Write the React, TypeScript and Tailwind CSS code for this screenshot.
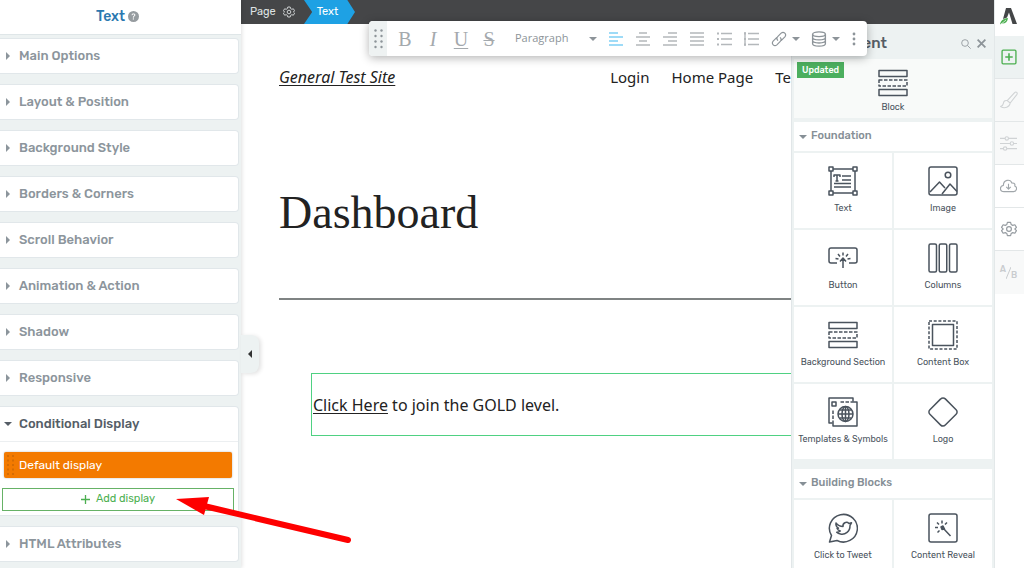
import React from "react";
import type { ReactNode } from "react";
import { BsQuestionCircleFill } from "react-icons/bs";

const sections = [
  "Main Options",
  "Layout & Position",
  "Background Style",
  "Borders & Corners",
  "Scroll Behavior",
  "Animation & Action",
  "Shadow",
  "Responsive",
];

function Svg({ size = 30, className = "", children, w = 1.5 }: { size?: number; className?: string; children: ReactNode; w?: number }) {
  return (
    <svg width={size} height={size} viewBox="0 0 30 30" fill="none" stroke="currentColor" strokeWidth={w} strokeLinejoin="round" aria-hidden="true" className={"shrink-0 " + className}>
      {children}
    </svg>
  );
}

function Caret({ down = false, className = "" }: { down?: boolean; className?: string }) {
  return (
    <svg width="8" height="8" viewBox="0 0 8 8" fill="currentColor" aria-hidden="true" className={"shrink-0 " + className}>
      <path d={down ? "M0 2h8L4 6z" : "M2 0v8l4-4z"} />
    </svg>
  );
}

const BlockIcon = () => (
  <Svg>
    <path d="M1 2.500h28v6H1zM1 21.500h28v6H1z" />
    <path d="M1 12h28v6H1z" strokeDasharray="3.500 1.500" />
  </Svg>
);
const TextIcon = () => (
  <Svg>
    <path d="M5 3h20M5 27h20M3 5v20M27 5v20" />
    <path d="M1 1h4v4H1zM25 1h4v4h-4zM1 25h4v4H1zM25 25h4v4h-4z" />
    <path d="M6 11V9h6v2M9 9v6M7.500 15h3M14 10h9M14 14h9M6 17.500h17M6 21h17" />
  </Svg>
);
const ImageIcon = () => (
  <Svg>
    <rect x="1" y="1" width="28" height="28" rx="2" />
    <circle cx="20" cy="9" r="2.800" />
    <path d="M2 26l9.500-10 5.500 6M14 28l8-10 7 7.500" />
  </Svg>
);
const ButtonIcon = () => (
  <Svg>
    <path d="M9 20H3a2 2 0 0 1-2-2V7a2 2 0 0 1 2-2h24a2 2 0 0 1 2 2v11a2 2 0 0 1-2 2h-6" />
    <path d="M15 25v-9M12 18.500l3-3.500 3 3.500M15 9.500v3M10 11l2 2.500M20 11l-2 2.500M7.500 15.500l3 .5M22.500 15.500l-3 .5" />
  </Svg>
);
const ColumnsIcon = () => (
  <Svg>
    <rect x="1" y="1" width="7.500" height="28" rx="1.500" />
    <rect x="11.250" y="1" width="7.500" height="28" rx="1.500" />
    <rect x="21.500" y="1" width="7.500" height="28" rx="1.500" />
  </Svg>
);
const ContentBoxIcon = () => (
  <Svg>
    <path d="M1 1h28v28H1z" strokeDasharray="3 1.700" />
    <path d="M4.500 4.500h21v21h-21z" />
  </Svg>
);
const TemplatesIcon = () => (
  <Svg>
    <path d="M25 4.500V1H1v25h3.500" />
    <path d="M11 5h18v24H5V12" />
    <path d="M4 5h4v4H4z" />
    <path d="M11 5h13M5 12v12" stroke="white" strokeDasharray="1.500 3.500" strokeWidth="2" />
    <circle cx="17.500" cy="17" r="7.500" />
    <ellipse cx="17.500" cy="17" rx="3.500" ry="7.500" />
    <path d="M17.500 9.500v15M10 17h15M11.500 13h12M11.500 21h12" />
  </Svg>
);
const LogoIcon = () => (
  <Svg>
    <path d="M12.700 1.900 1.900 12.700a3.200 3.200 0 0 0 0 4.600l10.800 10.800a3.200 3.200 0 0 0 4.600 0l10.800-10.800a3.200 3.200 0 0 0 0-4.600L17.300 1.900a3.200 3.200 0 0 0-4.600 0z" />
  </Svg>
);
const TweetIcon = () => (
  <Svg>
    <path d="M3.500 22.500A14 13.800 0 1 1 9 27.500L1.500 29z" />
    <path d="M8 10c2 2.500 4.500 3.500 7 3.500-.5-3.500 3.500-5.500 6-3l2.500-.7-1.500 2.700c.3 6-5 9.500-9.500 8.500-1.800-.3-3-1-3.800-1.800 1.600 0 2.800-.4 3.600-1.200-2-.6-2.800-1.500-3.200-2.600l1.400-.2C8.300 14 7.600 12.300 8 10z" />
  </Svg>
);
const RevealIcon = () => (
  <Svg>
    <rect x="1" y="1" width="28" height="28" rx="2" />
    <path d="M15 15l7.500 8M14 7.500v3M9 9.500l2 2M19 9.500l-2 2M7 14.500h3M9.500 19.500l2-2" />
    <path d="M13 14l2-1 1.500 3-2.500.5z" fill="currentColor" />
  </Svg>
);

function Gear({ size }: { size: number }) {
  return (
    <Svg size={size} w={2.200}>
      <path d="M12 2.500h6l1 4 3 1.700 4-1.200 3 5-3 3 3 3-3 5-4-1.200-3 1.700-1 4h-6l-1-4L8 21.800 4 23l-3-5 3-3-3-3 3-5 4 1.200 3-1.700z" />
      <circle cx="15" cy="15" r="4.500" />
    </Svg>
  );
}

function Tile({ label, icon }: { label: string; icon: ReactNode }) {
  return (
    <button type="button" className="flex h-[75px] min-w-0 flex-col items-center gap-1 bg-white pt-[13px] text-[9px] leading-4 whitespace-nowrap text-[#4a535d]">
      {icon}
      {label}
    </button>
  );
}

function Group({ title, children }: { title: string; children: ReactNode }) {
  return (
    <section className="flex flex-col gap-[2px]">
      <button type="button" className="flex h-[29px] items-center gap-[4px] bg-white pl-[5px] text-left text-[11px] font-medium text-[#868f96]">
        <Caret down />
        {title}
      </button>
      <div className="grid grid-cols-2 gap-[2px]">{children}</div>
    </section>
  );
}

function Lines({ rows, blue = false, label, marks = false }: { rows: string; blue?: boolean; label: string; marks?: boolean }) {
  return (
    <button type="button" aria-label={label} className={blue ? "text-[#7fd0f5]" : "text-[#b4b8bb]"}>
      <svg width="15" height="14" viewBox="0 0 15 14" stroke="currentColor" strokeWidth="1.400" fill="none" className="block">
        <path d={rows} />
        {marks && <path d="M0 1.500h2M0 7h2M0 12.500h2" strokeWidth="2" />}
      </svg>
    </button>
  );
}

function Toolbar() {
  const letter = "w-4 text-center font-['Liberation_Serif',serif] text-[20px] leading-6 text-[#a4a9ad]";
  return (
    <div role="toolbar" aria-label="Text formatting" className="absolute top-[21px] left-[128px] z-20 flex h-[35px] w-[498px] items-center rounded bg-white text-[#8d9499] shadow-[0_2px_10px_rgba(0,0,0,0.3)]">
      <span className="flex h-full w-[18px] items-center justify-center rounded-l bg-[#eef2f2]">
        <svg width="9" height="20" viewBox="0 0 9 20" fill="currentColor" aria-hidden="true">
          {[1.5, 7, 12.5, 18].map((y) => (
            <g key={y}>
              <circle cx="1.500" cy={y} r="1.200" />
              <circle cx="7.500" cy={y} r="1.200" />
            </g>
          ))}
        </svg>
      </span>
      <div className="ml-[10px] flex gap-[12px]">
        <button type="button" className={letter}>B</button>
        <button type="button" className={letter + " italic"}>I</button>
        <button type="button" className={letter + " underline decoration-1 underline-offset-2"}>U</button>
        <button type="button" className={letter + " line-through decoration-1"}>S</button>
      </div>
      <button type="button" className="ml-[18px] flex w-[82px] items-center justify-between font-['Open_Sans',sans-serif] text-[11px]">
        Paragraph
        <Caret down />
      </button>
      <div className="ml-[12px] flex items-center gap-[12px]">
        <Lines label="Align left" blue rows="M0 1h9M0 5h14M0 9h9M0 13h14" />
        <Lines label="Align center" rows="M3 1h8M0 5h14M3 9h8M0 13h14" />
        <Lines label="Align right" rows="M5 1h9M0 5h14M5 9h9M0 13h14" />
        <Lines label="Justify" rows="M0 1h14M0 5h14M0 9h14M0 13h14" />
        <Lines label="Bullet list" marks rows="M4 1.500h11M4 7h11M4 12.500h11" />
        <Lines label="Numbered list" marks rows="M1 0v14M4 1.500h11M4 7h11M4 12.500h11" />
      </div>
      <button type="button" aria-label="Link" className="ml-3 flex items-center gap-[5px]">
        <Svg size={16} w={2.200}>
          <path d="M13 18c-3-3-2-6 0-8l6-6c5-4 11 2 7 7l-7 7M17 12c3 3 2 6 0 8l-6 6c-5 4-11-2-7-7l7-7" />
        </Svg>
        <Caret down />
      </button>
      <button type="button" aria-label="Dynamic data" className="ml-[11px] flex items-center gap-[5px]">
        <Svg size={16} w={2.500}>
          <ellipse cx="15" cy="6" rx="12" ry="4.500" />
          <path d="M3 6v18c0 6 24 6 24 0V6M3 12c0 6 24 6 24 0M3 18c0 6 24 6 24 0" />
        </Svg>
        <Caret down />
      </button>
      <button type="button" aria-label="More" className="ml-[12px]">
        <svg width="4" height="14" viewBox="0 0 4 14" fill="currentColor">
          <circle cx="2" cy="2" r="1.400" /><circle cx="2" cy="7" r="1.400" /><circle cx="2" cy="12" r="1.400" />
        </svg>
      </button>
    </div>
  );
}

function Sidebar() {
  return (
    <aside className="relative z-10 flex w-[241px] shrink-0 flex-col bg-[#edf2f2] shadow-[1px_0_4px_rgba(0,0,0,0.12)]">
      <h2 className="flex h-[35px] shrink-0 items-center justify-center gap-[3px] border-b border-[#dfe6e8] bg-white pr-[6px] pb-[2px] text-[14px] font-medium text-[#2a78b0]">
        Text
        <BsQuestionCircleFill className="size-[11px] text-[#969ca0]" />
      </h2>
      <div className="flex flex-col gap-[10px] pt-[3px] pr-[2px]">
        {sections.map((name) => (
          <button key={name} type="button" className="flex h-9 items-center gap-[7px] rounded-r border border-l-0 border-[#e1e7ea] bg-white pl-1 text-left text-[13px] font-medium text-[#8c959c]">
            <Caret />
            {name}
          </button>
        ))}
        <section className="flex h-[110px] flex-col rounded-r border border-l-0 border-[#e1e7ea] bg-white">
          <button type="button" className="flex h-[35px] shrink-0 items-center gap-[7px] border-b border-[#eceff1] pl-1 text-left text-[13px] font-medium text-[#555d66]">
            <Caret down />
            Conditional Display
          </button>
          <div className="flex flex-col gap-[10px] pt-[10px] pr-1 pl-[2px]">
            <button type="button" className="mr-[2px] ml-[2px] flex h-[26px] items-center gap-[5px] rounded-xs bg-[#f37a00] pl-[3px] text-left text-[12px] text-white shadow-[0_0_2px_rgba(0,0,0,0.3)]">
              <svg width="7" height="20" viewBox="0 0 7 20" fill="#d66c03" aria-hidden="true">
                {[0, 4.5, 9, 13.5, 18].map((y) => (
                  <path key={y} d={`M0 ${y}h2v2H0zM5 ${y}h2v2H5z`} />
                ))}
              </svg>
              Default display
            </button>
            <button type="button" className="flex h-[23px] items-center justify-center gap-[6px] border border-[#66b266] text-[11px] text-[#4caf50]">
              <svg width="9" height="9" viewBox="0 0 9 9" stroke="currentColor" strokeWidth="1.300" aria-hidden="true"><path d="M4.500 0v9M0 4.500h9" /></svg>
              Add display
            </button>
          </div>
        </section>
        <button type="button" className="flex h-9 items-center gap-[7px] rounded-r border border-l-0 border-[#e1e7ea] bg-white pl-1 text-left text-[13px] font-medium text-[#8c959c]">
          <Caret />
          HTML Attributes
        </button>
      </div>
      <button type="button" aria-label="Collapse sidebar" className="absolute top-[335px] left-full flex h-[38px] w-[18px] items-center justify-center rounded-r-lg bg-[#edf2f2] text-[#333] shadow-[2px_1px_4px_rgba(0,0,0,0.12)]">
        <Caret className="rotate-180" />
      </button>
    </aside>
  );
}

function Rail() {
  const cell = "flex h-[43px] shrink-0 items-center justify-center border-b border-[#e3e7e8] pr-[2px]";
  return (
    <nav aria-label="Editor tools" className="z-10 flex w-[30px] shrink-0 flex-col border-l border-[#e3e8e9] bg-white">
      <div className="flex h-9 shrink-0 items-center justify-center pr-[2px] pb-1">
        <svg width="17" height="17" viewBox="0 0 17 17" aria-label="Thrive">
          <path d="M6 0h5l6 16h-4.500L9 4.500 7 9.500 3 11z" fill="#444648" />
          <path d="M0 17c.5-4 2.500-6.500 8-7-.5 4-3 6-6.500 5.500z" fill="#4caf50" />
          <path d="M0 17l6-5" stroke="white" strokeWidth=".7" />
        </svg>
      </div>
      <button type="button" aria-label="Add element" className={cell + " bg-[#edf2f2] text-[#4caf50]"}>
        <Svg size={16} w={2.500}><rect x="2" y="2" width="26" height="26" rx="2" /><path d="M15 8v14M8 15h14" strokeWidth="3" /></Svg>
      </button>
      <button type="button" aria-label="Styles" className={cell + " bg-[#f8f9f9] text-[#d0d3d5]"}>
        <Svg size={18} w={1.800}><path d="M12 16L24 3c3-3 6 0 4 3L17 20zM12 16c-4-1-6 1-6.500 5-.5 3-2 4-4.500 5 7 4 15 1 16-6z" /></Svg>
      </button>
      <button type="button" aria-label="Adjustments" className={cell + " bg-[#f8f9f9] text-[#d0d3d5]"}>
        <Svg size={17} w={2}><path d="M0 6h9M15 6h15M0 15h18M24 15h6M0 24h6M12 24h18" /><circle cx="12" cy="6" r="3" /><circle cx="21" cy="15" r="3" /><circle cx="9" cy="24" r="3" /></Svg>
      </button>
      <button type="button" aria-label="Cloud templates" className={cell + " text-[#a0a6aa]"}>
        <Svg size={17} w={2}><path d="M7 24c-8 0-8-10-1-11C6 3 18 1 21 9c5-1 6 3 5 5 5 2 4 10-2 10zM15 10v9M11 15.500l4 4 4-4" /></Svg>
      </button>
      <button type="button" aria-label="Settings" className={cell + " text-[#969ca1]"}><Gear size={16} /></button>
      <button type="button" aria-label="A/B test" className="flex h-[43px] shrink-0 items-center justify-center bg-[#f8f9f9] pr-[2px] text-[9px] font-medium text-[#c9cccf]">
        <span className="pb-[5px]">A</span>
        <svg width="5" height="12" viewBox="0 0 5 12" stroke="currentColor" aria-hidden="true"><path d="M0 12L5 0" /></svg>
        <span className="pt-[6px]">B</span>
      </button>
    </nav>
  );
}

export default function App() {
  return (
    <div className="relative flex h-screen overflow-hidden bg-white font-['Rubik','Roboto',sans-serif]">
      <Sidebar />
      <div className="relative flex min-w-0 flex-1 flex-col">
        <div className="flex h-6 shrink-0 items-center bg-[#454648] text-[11px] text-[#dfe2e4]">
          <button type="button" className="flex w-[63px] items-center gap-[7px] pl-[9px]">
            Page
            <Gear size={12} />
          </button>
          <button type="button" className="flex h-full w-[51px] items-center justify-center bg-[#1ea1e4] pr-[4px] text-white [clip-path:polygon(0_0,85%_0,100%_50%,85%_100%,0_100%,16%_50%)]">Text</button>
        </div>
        <Toolbar />
        <div className="flex min-h-0 flex-1">
          <main className="min-w-0 flex-1 overflow-hidden pl-[38px] font-['Noto_Sans',sans-serif] text-[16px] text-[#222]">
            <header className="flex items-center justify-between pt-[42px] leading-[22px]">
              <a href="#home" className="italic underline decoration-1 underline-offset-2">General Test Site</a>
              <nav className="flex gap-[22px] text-[15px]">
                <a href="#login">Login</a>
                <a href="#home">Home Page</a>
                <a href="#te">Te</a>
              </nav>
            </header>
            <h1 className="mt-[95px] font-['Liberation_Serif',serif] text-[46px] leading-[60px] font-light">Dashboard</h1>
            <hr className="mt-[55px] border-t-2 border-[#7f8383]" />
            <div className="mt-[73px] ml-[32px] flex h-[63px] items-center border border-r-0 border-solid border-[#4fd182] pl-px">
              <p><a href="#join" className="underline decoration-1 underline-offset-2">Click Here</a> to join the GOLD level.</p>
            </div>
          </main>
          <aside className="flex w-[203px] shrink-0 flex-col overflow-hidden border-l border-[#e1e6e8] bg-[#edf2f2] pr-[2px] pl-[2px]">
            <header className="flex h-[35px] shrink-0 items-center pt-1 pr-[6px] text-[#8d9499]">
              <h2 className="flex-1 pl-px text-[15px] font-medium text-[#555d66]">Add Element</h2>
              <button type="button" aria-label="Search"><Svg size={10} w={2.500}><circle cx="12" cy="12" r="10" /><path d="M20 20l9 9" /></Svg></button>
              <button type="button" aria-label="Close" className="ml-[6px]"><Svg size={9} w={6}><path d="M2 2l26 26M28 2L2 28" /></Svg></button>
            </header>
            <div className="relative mb-1 grid shrink-0 bg-[#f8faf9]">
              <button type="button" className="flex h-[59px] flex-col items-center gap-[3px] pt-[9px] text-[9px] leading-3 text-[#4a535d]">
                <BlockIcon />
                Block
              </button>
              <span className="absolute top-[3px] left-[3px] bg-[#4caf5f] px-[5px] text-[9px] leading-4 font-medium text-white">Updated</span>
            </div>
            <div className="flex flex-col gap-[10px]">
              <Group title="Foundation">
                <Tile label="Text" icon={<TextIcon />} />
                <Tile label="Image" icon={<ImageIcon />} />
                <Tile label="Button" icon={<ButtonIcon />} />
                <Tile label="Columns" icon={<ColumnsIcon />} />
                <Tile label="Background Section" icon={<BlockIcon />} />
                <Tile label="Content Box" icon={<ContentBoxIcon />} />
                <Tile label="Templates & Symbols" icon={<TemplatesIcon />} />
                <Tile label="Logo" icon={<LogoIcon />} />
              </Group>
              <Group title="Building Blocks">
                <Tile label="Click to Tweet" icon={<TweetIcon />} />
                <Tile label="Content Reveal" icon={<RevealIcon />} />
              </Group>
            </div>
          </aside>
        </div>
      </div>
      <Rail />
      <svg width="180" height="52" viewBox="0 0 180 52" aria-hidden="true" className="pointer-events-none absolute top-[494px] left-[174px] z-30">
        <path d="M30 12L174 46" stroke="#fe0000" strokeWidth="6" strokeLinecap="round" />
        <path d="M2 5l33-2-5 18z" fill="#fe0000" />
      </svg>
    </div>
  );
}
